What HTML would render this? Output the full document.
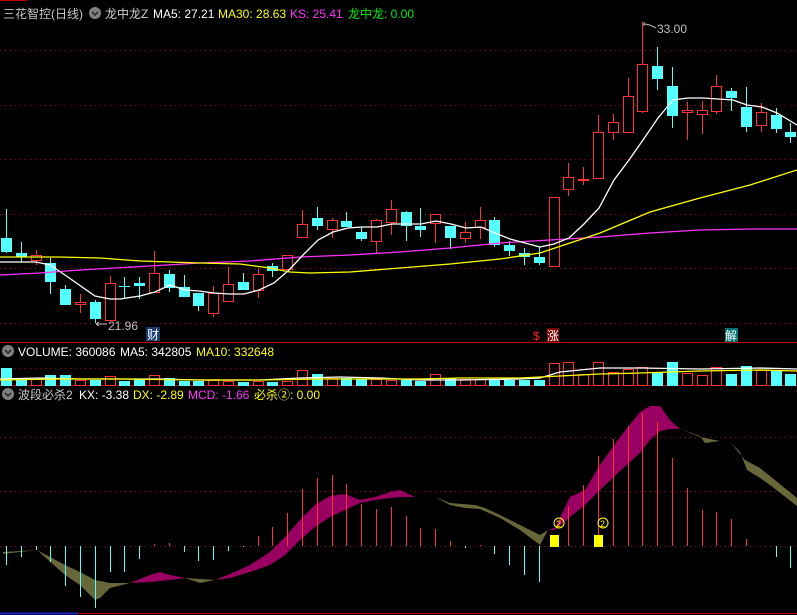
<!DOCTYPE html>
<html><head><meta charset="utf-8"><style>
html,body{margin:0;padding:0;background:#000;width:797px;height:615px;overflow:hidden}
svg{display:block}
text{font-family:"Liberation Sans","Noto Sans CJK SC",sans-serif;font-size:12px}
</style></head><body>
<svg id="s" width="797" height="615" xmlns="http://www.w3.org/2000/svg">
<rect width="797" height="615" fill="#000"/>
<line x1="0" y1="0.5" x2="27" y2="0.5" stroke="#c00000"/>
<g stroke="#a00000" stroke-dasharray="1,4" stroke-width="1">
<line x1="0" y1="50.5" x2="797" y2="50.5"/><line x1="0" y1="105.5" x2="797" y2="105.5"/>
<line x1="0" y1="159.5" x2="797" y2="159.5"/><line x1="0" y1="214.5" x2="797" y2="214.5"/>
<line x1="0" y1="268.5" x2="797" y2="268.5"/><line x1="0" y1="323.5" x2="797" y2="323.5"/>
<line x1="0" y1="368.5" x2="797" y2="368.5"/>
<line x1="0" y1="437.5" x2="797" y2="437.5"/><line x1="0" y1="491.5" x2="797" y2="491.5"/>
<line x1="0" y1="546.5" x2="797" y2="546.5"/>
</g>
<line x1="0" y1="342.5" x2="797" y2="342.5" stroke="#c00000"/>
<line x1="0" y1="385.5" x2="797" y2="385.5" stroke="#c00000"/>
<line x1="0" y1="613.5" x2="797" y2="613.5" stroke="#c00000"/>
<line x1="0" y1="613.5" x2="78" y2="613.5" stroke="#2020c0" stroke-width="2"/>
<g id="g"></g>
<!-- headers -->
<text x="3" y="18" fill="#c8c8c8">三花智控(日线)</text>
<circle cx="95" cy="13" r="6" fill="#808080"/><path d="M92 12l3 3 3-3" stroke="#222" fill="none" stroke-width="1.5"/>
<text x="105" y="18" fill="#d0d0d0">龙中龙Z</text>
<text x="153" y="18" fill="#fff">MA5: 27.21</text>
<text x="218" y="18" fill="#ffff00">MA30: 28.63</text>
<text x="290" y="18" fill="#ff33ff">KS: 25.41</text>
<text x="348" y="18" fill="#00ee00">龙中龙: 0.00</text>
<circle cx="8" cy="351" r="6" fill="#808080"/><path d="M5 350l3 3 3-3" stroke="#222" fill="none" stroke-width="1.5"/>
<text x="18" y="356" fill="#fff">VOLUME: 360086</text>
<text x="120" y="356" fill="#fff">MA5: 342805</text>
<text x="196" y="356" fill="#ffff00">MA10: 332648</text>
<circle cx="8" cy="394" r="6" fill="#808080"/><path d="M5 393l3 3 3-3" stroke="#222" fill="none" stroke-width="1.5"/>
<text x="18" y="399" fill="#c8c8c8">波段必杀2</text>
<text x="79" y="399" fill="#fff">KX: -3.38</text>
<text x="133" y="399" fill="#ffff00">DX: -2.89</text>
<text x="188" y="399" fill="#ff33ff">MCD: -1.66</text>
<text x="254" y="399" fill="#ffff00">必杀②: 0.00</text>
<!-- annotations -->
<text x="108" y="330" fill="#c0c0c0">21.96</text>
<path d="M96 324h11M96 324l3-2M96 324l3 2" stroke="#c0c0c0" fill="none"/>
<text x="657" y="33" fill="#c0c0c0">33.00</text>
<path d="M644 24q5 0 12 4M644 22v4" stroke="#c0c0c0" fill="none"/>
<rect x="146" y="327" width="14" height="14" fill="#1c3c70"/>
<text x="147" y="339" fill="#fff">财</text>
<text x="533" y="340" fill="#ff2020">$</text>
<rect x="547" y="328" width="12" height="14" fill="#800000"/>
<text x="547" y="340" fill="#fff">涨</text>
<rect x="725" y="328" width="13" height="14" fill="#007070"/>
<text x="725" y="340" fill="#fff">解</text>
<circle cx="559" cy="523" r="5" fill="none" stroke="#ffff00"/><text x="556" y="527" fill="#ffff00" style="font-size:9px">2</text>
<circle cx="603" cy="523" r="5" fill="none" stroke="#ffff00"/><text x="600" y="527" fill="#ffff00" style="font-size:9px">2</text>
</svg>
<script>
var NS="http://www.w3.org/2000/svg",g=document.getElementById("g");
function el(t,a){var e=document.createElementNS(NS,t);for(var k in a)e.setAttribute(k,a[k]);g.appendChild(e);return e;}
function X(i){return 6+14.8*i;}
var R="#ff3232",C="#54ffff";
function rib(top,bot,col){var p=top.concat(bot.slice().reverse()).map(function(q){return q.join(",")}).join(" ");el("polygon",{points:p,fill:col});}
var M="#9a0062",O="#67673a";
rib([[3,552],[37,550]],[[3,554],[37,550]],O);
rib([[37,550],[65,565],[80,572],[95,580],[110,583],[130,583]],[[37,550],[65,575],[80,585],[95,600],[100,598],[110,588],[130,583]],O);
rib([[130,583],[150,575],[160,572],[170,575],[185,578]],[[130,583],[150,582],[170,580],[185,578]],M);
rib([[185,578],[215,580]],[[185,578],[200,583],[215,580]],O);
rib([[215,580],[230,574],[250,565],[270,552],[285,537],[300,520],[315,505],[330,496],[345,494],[360,500],[375,497],[390,492],[400,490],[415,497]],[[215,580],[230,578],[250,572],[270,565],[285,555],[300,540],[315,527],[330,517],[345,510],[360,503],[375,500],[390,498],[400,497],[415,497]],M);
rib([[415,497],[435,497],[450,503],[475,505],[485,508],[500,515],[520,525],[540,535],[548,530]],[[415,497],[435,497],[450,505],[465,508],[480,509],[500,518],[520,530],[540,545],[548,530]],O);
rib([[548,530],[555,528],[570,497],[585,490],[600,465],[620,437],[640,412],[650,406],[660,406],[670,420],[680,429]],[[548,530],[555,530],[570,517],[585,505],[600,490],[620,471],[640,453],[650,440],[660,431],[670,429],[680,429]],M);
rib([[680,429],[700,436],[705,443],[720,441],[730,442],[745,460],[760,468],[770,476],[797,498]],[[680,429],[700,437],[720,441],[730,442],[740,452],[747,470],[760,478],[770,485],[797,506]],O);
var mb=[565,557,550,562,586,597,608,572,572,559,544,543,552,561,560,551,547,536,527,513,489,478,475,484,504,509,507,516,528,529,541,548,545,554,565,575,582,546,506,485,456,439,426,413,422,458,488,510,512,519,539,546,557,568];
mb.forEach(function(v,i){if(v==546)return;var x=Math.round(X(i))+0.5;el("line",{x1:x,x2:x,y1:546,y2:v,stroke:v<546?R:C});});
el("rect",{x:550,y:535,width:9,height:12,fill:"#ffff00"});
el("rect",{x:594,y:535,width:9,height:12,fill:"#ffff00"});
var vb=[368,379,379,375,375,380,380,376,381,379,375,378,381,381,380,381,382,381,382,381,370,374,378,378,379,379,380,380,381,374,378,379,379,379,380,380,380,363,362,374,362,372,369,367,372,362,373,375,367,374,366,370,371,374];
var K=[["c",209,238,252,253],["c",242,253,257,262],["r",250,255,260,265],["c",258,263,282,294],["c",285,289,305,305],["r",294,302,304,313],["c",300,302,319,323],["r",276,283,320,320],["c",277,286,287,299],["c",277,283,286,299],["r",251,273,292,292],["c",270,274,288,292],["c",275,287,297,297],["c",293,293,306,311],["r",286,293,313,317],["r",267,284,301,301],["c",273,282,290,290],["r",268,274,290,298],["c",263,266,271,277],["r",255,255,269,269],["r",210,224,237,238],["c",207,218,226,230],["r",218,220,229,238],["c",212,221,227,227],["c",227,232,239,241],["r",219,220,241,253],["r",200,209,222,235],["c",211,212,226,241],["c",208,226,230,237],["r",214,214,223,243],["c",226,226,238,249],["r",222,232,238,243],["r",207,220,227,239],["c",217,220,245,247],["c",241,245,251,256],["c",248,253,257,265],["c",247,257,263,265],["r",197,197,266,267],["r",163,177,189,196],["r",167,179,180,185],["r",115,132,178,178],["r",114,122,132,140],["r",78,96,132,132],["r",22,64,111,113],["c",47,66,79,90],["c",67,86,116,128],["r",102,110,112,140],["r",101,110,114,134],["r",75,86,111,114],["c",88,91,98,111],["c",87,107,127,132],["r",103,112,125,132],["c",108,115,129,133],["c",123,132,137,143]];
K.forEach(function(k,i){var x=Math.round(X(i)),col=k[0]=="r"?R:C;
 el("line",{x1:x+0.5,x2:x+0.5,y1:k[1],y2:k[4],stroke:col});
 var h=Math.max(1,k[3]-k[2]);
 if(k[0]=="r")el("rect",{x:x-4.5,y:k[2]+0.5,width:10,height:h,fill:"#000",stroke:col});
 else el("rect",{x:x-5,y:k[2],width:11,height:h,fill:col});
 var vx=x-5,vy=vb[i];
 if(k[0]=="r")el("rect",{x:vx+0.5,y:vy+0.5,width:10,height:385-vy,fill:"none",stroke:col});
 else el("rect",{x:vx,y:vy,width:11,height:385-vy+1,fill:col});
});
function pl(pts,col){el("polyline",{points:pts.map(function(q){return q.join(",")}).join(" "),fill:"none",stroke:col,"stroke-width":1.3});}
pl([[0,275],[40,273],[80,270],[150,266],[200,263],[250,261],[300,257],[350,255],[400,252],[450,248],[500,243],[550,240],[600,237],[650,233],[700,230],[750,229],[797,229]],"#ff33ff");
pl([[0,257],[58,257],[100,258],[140,261],[200,263],[240,264],[270,268],[290,272],[310,273],[350,272],[400,268],[450,264],[500,259],[540,253],[600,233],[650,212],[700,198],[750,185],[797,170]],"#ffff00");
pl([[0,262],[36,262],[50,265],[65,275],[95,296],[110,299],[120,299],[140,296],[155,292],[170,285],[185,290],[199,291],[214,293],[229,294],[244,294],[259,290],[274,283],[289,270],[303,255],[318,240],[333,232],[348,228],[362,227],[377,227],[392,224],[421,224],[436,221],[451,224],[466,228],[481,227],[495,233],[510,239],[525,243],[540,247],[554,244],[569,238],[584,224],[599,208],[614,180],[629,160],[643,140],[658,118],[673,100],[688,98],[703,98],[718,99],[733,100],[747,105],[762,107],[777,113],[792,122],[797,125]],"#ffffff");
pl([[0,379],[40,378],[80,379],[120,379],[160,379],[200,380],[260,380],[300,378],[340,377],[380,378],[420,380],[460,380],[520,379],[540,378],[560,372],[580,370],[600,368],[640,368],[700,369],[760,368],[797,369]],"#ffffff");
pl([[0,380],[60,379],[120,379],[200,380],[260,380],[320,379],[380,379],[420,379],[460,378],[520,378],[560,376],[600,374],[640,373],[700,371],[760,370],[797,371]],"#ffff00");
</script>
</body></html>
